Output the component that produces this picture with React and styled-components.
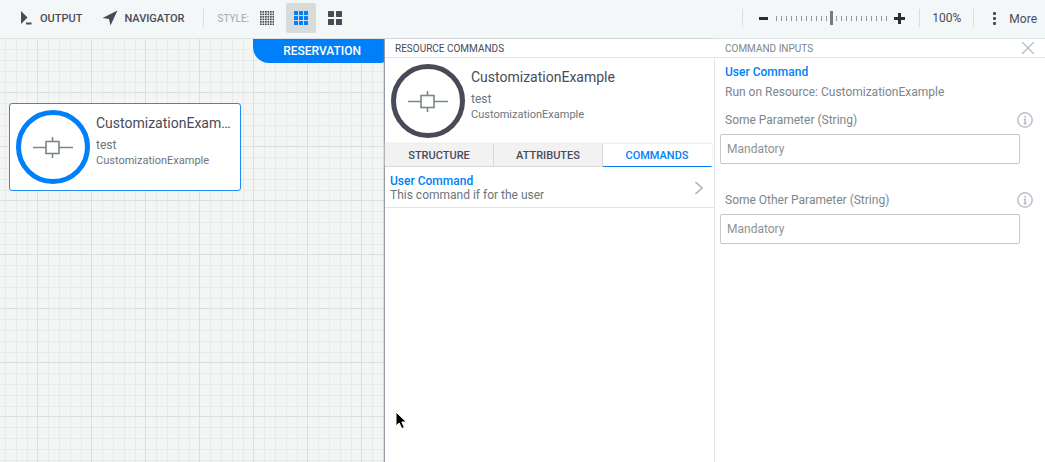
import React from "react";
import styled, { createGlobalStyle } from "styled-components";

const GlobalStyle = createGlobalStyle`
  *, *::before, *::after { box-sizing: border-box; }
  body {
    margin: 0;
    font-family: Roboto, "Liberation Sans", sans-serif;
    font-size: 12px;
    color: #484b57;
    background: #fff;
  }
  button, input { font-family: inherit; }
  h1, h2, h3, p { margin: 0; }
`;

const Page = styled.div`
  display: flex;
  flex-direction: column;
  min-height: 100vh;
`;

const Toolbar = styled.header`
  display: flex;
  align-items: center;
  justify-content: space-between;
  height: 39px;
  padding: 0 8px 2px 20px;
  background: #f4f7f8;
  border-bottom: 1px solid #dce1e2;
`;

const ToolGroup = styled.div`
  display: flex;
  align-items: center;
`;

const ToolButton = styled.button`
  display: flex;
  align-items: center;
  gap: ${({ $gap }) => $gap || 6}px;
  height: 30px;
  margin: 0 ${({ $after }) => $after || 0}px 0 0;
  padding: 0;
  border: 0;
  background: none;
  color: #484b57;
  font-size: 11px;
  font-weight: 500;
  cursor: pointer;
`;

const MoreButton = styled(ToolButton)`
  padding-top: 2px;
  font-size: 12px;
  font-weight: 400;
`;

const Divider = styled.span`
  width: 1px;
  height: 18px;
  background: #d9dddf;
`;

const StyleLabel = styled.span`
  margin: 0 3px 0 14px;
  color: #a3a6a9;
  font-size: 10px;
`;

const StyleOptions = styled.div`
  display: flex;
  gap: 4px;
`;

const StyleOption = styled.button`
  display: flex;
  align-items: center;
  justify-content: center;
  width: 30px;
  height: 30px;
  padding: 0;
  border: 0;
  border-radius: 2px;
  background: ${({ $active }) => ($active ? "#d7dbdc" : "transparent")};
  color: ${({ $active }) => ($active ? "#007ffa" : "#484b57")};
  cursor: pointer;
`;

const ZoomControl = styled.div`
  display: flex;
  align-items: center;
  gap: 6px;
  padding: 0 14px 0 15px;
`;

const ZoomStep = styled.button`
  display: flex;
  padding: 0;
  border: 0;
  background: none;
  cursor: pointer;
`;

const ZoomSlider = styled.input`
  appearance: none;
  width: 113px;
  height: 14px;
  margin: 0;
  background: none;

  &::-webkit-slider-runnable-track {
    height: 14px;
    background: repeating-linear-gradient(90deg, #92969d 0 1px, transparent 1px 5px) 1px 5px / 112px 5px no-repeat;
  }
  &::-webkit-slider-thumb {
    appearance: none;
    width: 3px;
    height: 14px;
    background: #777980;
  }
`;

const ZoomValue = styled.output`
  width: 53px;
  text-align: center;
`;

const Workspace = styled.main`
  display: flex;
  flex: 1;
`;

const minorLine = "#e9ebeb";
const majorLine = "#dcdfdf";

const Canvas = styled.section`
  position: relative;
  display: flex;
  flex: 1;
  flex-direction: column;
  min-width: 0;
  background-color: #f4f6f6;
  background-image:
    linear-gradient(90deg, ${majorLine} 1px, transparent 1px),
    linear-gradient(${majorLine} 1px, transparent 1px),
    linear-gradient(90deg, transparent 11px, ${minorLine} 11px 12px, transparent 12px 22px, ${minorLine} 22px 23px, transparent 23px 33px, ${minorLine} 33px 34px, transparent 34px 44px, ${minorLine} 44px 45px, transparent 45px),
    linear-gradient(transparent 11px, ${minorLine} 11px 12px, transparent 12px 22px, ${minorLine} 22px 23px, transparent 23px 33px, ${minorLine} 33px 34px, transparent 34px 44px, ${minorLine} 44px 45px, transparent 45px);
  background-size: 54px 54px;
  background-position: 37px 53px;
`;

const ReservationTab = styled.button`
  align-self: flex-end;
  height: 24px;
  padding: 0 24px 0 30px;
  border: 0;
  border-radius: 0 0 4px 16px;
  background: #007ffa;
  color: #fff;
  font-size: 12px;
  font-weight: 500;
`;

const ResourceNode = styled.article`
  position: absolute;
  left: 9px;
  top: 64px;
  width: 232px;
  padding: 6px;
  border: 1px solid #1f8bf5;
  border-radius: 3px;
  background: #fff;
`;

const ResourceCard = styled.div`
  display: flex;
  gap: 6px;
`;

const ResourceText = styled.div`
  flex: 1;
  min-width: 0;
  padding-top: 4px;
  color: #6b767c;
  font-size: 12px;
  line-height: 15px;
`;

const ResourceName = styled.h2`
  overflow: hidden;
  margin-bottom: 6px;
  color: #484b57;
  font-size: 14px;
  font-weight: 400;
  line-height: 18px;
  text-overflow: ellipsis;
  white-space: nowrap;
`;

const ResourceType = styled.p`
  font-size: 11px;
`;

const Panel = styled.aside`
  position: relative;
  flex: 0 0 330px;
  background: #fff;
`;

const CommandsPanel = styled(Panel)`
  display: flex;
  flex-direction: column;
  box-shadow: -1px 0 1px #969ba5;
`;

const PanelHeader = styled.header`
  display: flex;
  align-items: center;
  justify-content: space-between;
  height: 19px;
  padding: 0 10px;
  border-bottom: 1px solid #e3e6e7;
`;

const PanelTitle = styled.h1`
  padding-top: 1px;
  color: ${({ $muted }) => ($muted ? "#7c868c" : "#484b57")};
  font-size: 10px;
  font-weight: 400;
  line-height: 18px;
`;

const PanelBody = styled.div`
  flex: 1;
  border-right: 1px solid #e3e6e7;
`;

const ResourceSummary = styled.div`
  height: 86px;
  padding: 6px;
`;

const Tabs = styled.div`
  display: flex;
  margin-right: 2px;
  box-shadow: 0 -1px 2px #e6e6e6;
`;

const Tab = styled.button`
  flex: 1;
  height: 23px;
  padding: 0;
  border: 0;
  border-right: 1px solid ${({ $active }) => ($active ? "transparent" : "#d5d8d9")};
  border-bottom: 1px solid ${({ $active }) => ($active ? "#007ffa" : "#d5d8d9")};
  background: ${({ $active }) => ($active ? "#fff" : "#f2f2f2")};
  color: ${({ $active }) => ($active ? "#007ffa" : "#484b57")};
  font-size: 11px;
  font-weight: 500;
  cursor: pointer;
`;

const CommandRow = styled.button`
  display: flex;
  align-items: center;
  justify-content: space-between;
  width: 100%;
  height: 41px;
  padding: 2px 10px 0 5px;
  border: 0;
  border-bottom: 1px solid #dfe5e6;
  background: #fff;
  color: #6b767c;
  font-size: 12px;
  line-height: 14px;
  text-align: left;
  cursor: pointer;
`;

const CommandName = styled.strong`
  display: block;
  color: #007ffa;
  font-weight: 500;
`;

const IconButton = styled.button`
  display: flex;
  padding: 0;
  border: 0;
  background: none;
  cursor: pointer;
`;

const InputsForm = styled.form`
  padding: 4px 25px 0 5px;
`;

const FormHeading = styled.div`
  padding-left: 5px;
  color: #7c868c;
  font-size: 12px;
  line-height: 20px;
`;

const FormTitle = styled.h2`
  color: #007ffa;
  font-size: 12px;
  font-weight: 500;
  line-height: 20px;
`;

const Field = styled.div`
  margin: 8px 0 26px;
`;

const FieldHead = styled.div`
  display: flex;
  align-items: center;
  justify-content: space-between;
  height: 20px;
  margin: 0 -13px 4px 5px;
`;

const FieldLabel = styled.label`
  color: #7c868c;
  font-size: 12px;
`;

const TextInput = styled.input`
  display: block;
  width: 100%;
  height: 30px;
  padding: 0 6px;
  border: 1px solid #c6c9ca;
  border-radius: 2px;
  background: #fff;
  color: #484b57;
  font-size: 12px;

  &::placeholder { color: #8f9294; }
`;

const Pointer = styled.svg`
  position: absolute;
  left: 10px;
  top: 372px;
  pointer-events: none;
`;

function OutputIcon() {
  return (
    <svg width="12" height="14" viewBox="0 0 12 14" aria-hidden="true">
      <path d="M1 0 L7.5 6.5 L1 13 Z" fill="#484b57" />
      <path d="M6 12.5 H11.5" stroke="#484b57" strokeWidth="2" />
    </svg>
  );
}

function NavigatorIcon() {
  return (
    <svg width="16" height="16" viewBox="0 0 16 16" aria-hidden="true">
      <path d="M15.5 0.5 L8.5 15.5 L7 9 L0.5 8 Z" fill="#484b57" />
    </svg>
  );
}

function GridIcon({ count, cell, gap }) {
  const squares = [];
  for (let row = 0; row < count; row += 1) {
    for (let col = 0; col < count; col += 1) {
      squares.push(
        <rect key={`${row}-${col}`} x={col * (cell + gap)} y={row * (cell + gap)} width={cell} height={cell} rx={cell > 3 ? 0.5 : 0} />
      );
    }
  }
  return (
    <svg width="14" height="14" viewBox="0 0 14 14" fill="currentColor" aria-hidden="true">
      {squares}
    </svg>
  );
}

function ResourceIcon({ color }) {
  return (
    <svg width="74" height="74" viewBox="0 0 74 74" fill="none" aria-hidden="true">
      <circle cx="37" cy="37" r="34.5" fill="#fff" stroke={color} strokeWidth="5" />
      <path d="M17 37.5 H30 M43 37.5 H57 M36.5 27 V31 M36.5 44 V48" stroke="#7a868a" strokeWidth="1.6" />
      <rect x="30" y="31.5" width="13" height="12" stroke="#7a868a" strokeWidth="1.6" />
    </svg>
  );
}

function InfoIcon() {
  return (
    <svg width="16" height="16" viewBox="0 0 16 16" fill="none" aria-hidden="true">
      <circle cx="8" cy="8" r="7.2" stroke="#bdbfc8" strokeWidth="1.5" />
      <path d="M8 3.8 V5.6 M6.8 7.4 H8.2 V11.4 M6.6 11.6 H9.6" stroke="#bdbfc8" strokeWidth="1.6" />
    </svg>
  );
}

function Resource({ color, name }) {
  return (
    <ResourceCard>
      <ResourceIcon color={color} />
      <ResourceText>
        <ResourceName>{name}</ResourceName>
        <p>test</p>
        <ResourceType>CustomizationExample</ResourceType>
      </ResourceText>
    </ResourceCard>
  );
}

function ParameterField({ id, label }) {
  return (
    <Field>
      <FieldHead>
        <FieldLabel htmlFor={id}>{label}</FieldLabel>
        <IconButton type="button" aria-label={`About ${label}`}>
          <InfoIcon />
        </IconButton>
      </FieldHead>
      <TextInput id={id} type="text" placeholder="Mandatory" />
    </Field>
  );
}

export default function App() {
  return (
    <>
      <GlobalStyle />
      <Page>
        <Toolbar>
          <ToolGroup>
            <ToolButton $gap={8} $after={20}>
              <OutputIcon />
              OUTPUT
            </ToolButton>
            <ToolButton $gap={6} $after={18}>
              <NavigatorIcon />
              NAVIGATOR
            </ToolButton>
            <Divider />
            <StyleLabel>STYLE:</StyleLabel>
            <StyleOptions>
              <StyleOption aria-label="Small icons">
                <GridIcon count={6} cell={1.7} gap={0.8} />
              </StyleOption>
              <StyleOption aria-label="Medium icons" $active>
                <GridIcon count={3} cell={4} gap={1} />
              </StyleOption>
              <StyleOption aria-label="Large icons">
                <GridIcon count={2} cell={6} gap={2} />
              </StyleOption>
            </StyleOptions>
          </ToolGroup>
          <ToolGroup>
            <Divider />
            <ZoomControl>
              <ZoomStep aria-label="Zoom out">
                <svg width="11" height="11" viewBox="0 0 11 11" aria-hidden="true">
                  <path d="M1 5.5 H10" stroke="#2c2d33" strokeWidth="3" />
                </svg>
              </ZoomStep>
              <ZoomSlider type="range" min="0" max="200" defaultValue="100" aria-label="Zoom" />
              <ZoomStep aria-label="Zoom in">
                <svg width="11" height="11" viewBox="0 0 11 11" aria-hidden="true">
                  <path d="M0 5.5 H11 M5.5 0 V11" stroke="#2c2d33" strokeWidth="3" />
                </svg>
              </ZoomStep>
            </ZoomControl>
            <Divider />
            <ZoomValue>100%</ZoomValue>
            <Divider />
            <MoreButton $gap={11}>
              <svg width="24" height="14" viewBox="0 0 24 14" fill="#484b57" aria-hidden="true">
                <rect x="19" y="0" width="3" height="3" rx="1" />
                <rect x="19" y="5" width="3" height="3" rx="1" />
                <rect x="19" y="10" width="3" height="3" rx="1" />
              </svg>
              More
            </MoreButton>
          </ToolGroup>
        </Toolbar>
        <Workspace>
          <Canvas>
            <ReservationTab>RESERVATION</ReservationTab>
            <ResourceNode>
              <Resource color="#007ffa" name="CustomizationExample" />
            </ResourceNode>
          </Canvas>
          <CommandsPanel>
            <PanelHeader>
              <PanelTitle>RESOURCE COMMANDS</PanelTitle>
            </PanelHeader>
            <PanelBody>
              <ResourceSummary>
                <Resource color="#484b57" name="CustomizationExample" />
              </ResourceSummary>
              <Tabs>
                <Tab>STRUCTURE</Tab>
                <Tab>ATTRIBUTES</Tab>
                <Tab $active>COMMANDS</Tab>
              </Tabs>
              <CommandRow>
                <span>
                  <CommandName>User Command</CommandName>
                  This command if for the user
                </span>
                <svg width="10" height="14" viewBox="0 0 10 14" fill="none" aria-hidden="true">
                  <path d="M1.5 1 L8 7 L1.5 13" stroke="#aeb0ba" strokeWidth="1.6" />
                </svg>
              </CommandRow>
            </PanelBody>
            <Pointer width="13" height="19" viewBox="0 0 13 19" aria-hidden="true">
              <path d="M1 1 V15 L4.2 12 L6.8 17.6 L9.4 16.4 L6.8 11 H11.4 Z" fill="#000" stroke="#fff" strokeWidth="1" />
            </Pointer>
          </CommandsPanel>
          <Panel>
            <PanelHeader>
              <PanelTitle as="h2" $muted>COMMAND INPUTS</PanelTitle>
              <IconButton aria-label="Close">
                <svg width="14" height="12" viewBox="0 0 14 12" aria-hidden="true">
                  <path d="M1 0 L13 12 M13 0 L1 12" stroke="#b9bbc5" strokeWidth="1.4" />
                </svg>
              </IconButton>
            </PanelHeader>
            <InputsForm>
              <FormHeading>
                <FormTitle>User Command</FormTitle>
                <p>Run on Resource: CustomizationExample</p>
              </FormHeading>
              <ParameterField id="some-parameter" label="Some Parameter (String)" />
              <ParameterField id="some-other-parameter" label="Some Other Parameter (String)" />
            </InputsForm>
          </Panel>
        </Workspace>
      </Page>
    </>
  );
}
